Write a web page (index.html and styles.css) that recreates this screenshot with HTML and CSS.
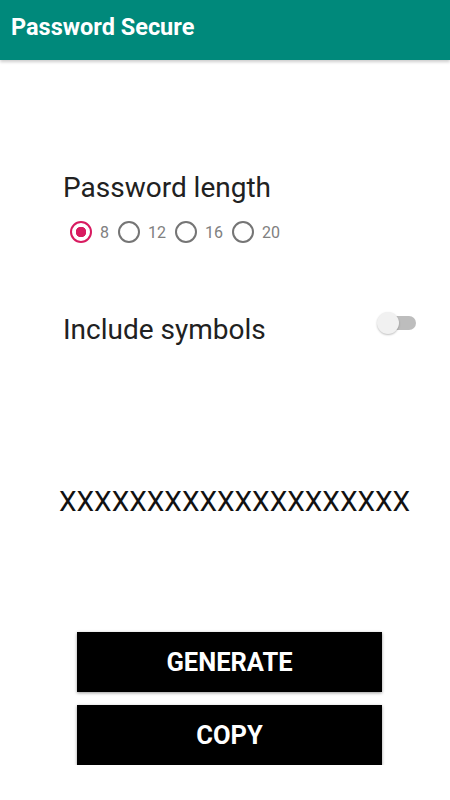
FILE: index.html
```html
<!DOCTYPE html>
<html lang="en">
<head>
    <meta charset="UTF-8">
    <meta name="viewport" content="width=device-width, initial-scale=1.0">
    <title>Password Secure</title>
    <link rel="stylesheet" href="styles.css">
</head>
<body>
    <header class="app-bar">Password Secure</header>

    <main class="content">
        <p class="label">Password length</p>
        <div class="radio-group">
            <label class="radio"><input type="radio" name="length" value="8" checked>8</label>
            <label class="radio"><input type="radio" name="length" value="12">12</label>
            <label class="radio"><input type="radio" name="length" value="16">16</label>
            <label class="radio"><input type="radio" name="length" value="20">20</label>
        </div>

        <div class="symbols-row">
            <p class="label">Include symbols</p>
            <!-- Switch, off by default -->
            <div class="switch">
                <span class="switch-track"></span>
                <span class="switch-thumb"></span>
            </div>
        </div>

        <p class="password">XXXXXXXXXXXXXXXXXXXX</p>
    </main>

    <div class="actions">
        <button type="button">GENERATE</button>
        <button type="button">COPY</button>
    </div>
</body>
</html>
```

FILE: styles.css
```css
body {
    margin: 0;
    font-family: Roboto, "Liberation Sans", sans-serif;
    background-color: #FFFFFF;
    color: #212121;
}

.app-bar {
    height: 60px;
    box-sizing: border-box;
    padding: 14px 11px 0;
    background-color: #00897B;
    color: #FFFFFF;
    font-size: 23.5px;
    font-weight: 700;
    line-height: 26px;
    box-shadow: 0 2px 3px rgba(0, 0, 0, 0.2);
}

.content {
    padding: 112px 34px 0 63px;
}

.label {
    margin: 0;
    font-size: 28px;
    line-height: 32px;
}

.radio-group {
    display: flex;
    align-items: center;
    margin: 17px 0 0 7px;
}

.radio {
    display: flex;
    align-items: center;
    gap: 8px;
    margin-right: 9px;
    font-size: 16px;
    color: #808080;
}

.radio input {
    appearance: none;
    margin: 0;
    width: 22px;
    height: 22px;
    box-sizing: border-box;
    border: 2px solid #757575;
    border-radius: 50%;
}

.radio input:checked {
    border-color: #D81B60;
    background: radial-gradient(circle, #D81B60 0 5px, transparent 5.5px);
}

.symbols-row {
    display: flex;
    justify-content: space-between;
    align-items: flex-start;
    margin-top: 71px;
}

.switch {
    position: relative;
    width: 39px;
    height: 22px;
    margin-top: -2px;
}

.switch-track {
    display: block;
    margin: 4px 0 0 3px;
    width: 36px;
    height: 14px;
    border-radius: 7px;
    background-color: #BDBDBD;
}

/* thumb sits over the left end of the track */
.switch-thumb {
    position: absolute;
    left: 0;
    top: 0;
    width: 22px;
    height: 22px;
    border-radius: 50%;
    background-color: #F1F1F1;
    box-shadow: 0 1px 2px rgba(0, 0, 0, 0.25);
}

.password {
    margin: 140px 0 0 -4px;
    font-size: 28px;
    line-height: 32px;
    color: #111111;
}

.actions {
    display: flex;
    flex-direction: column;
    gap: 13px;
    margin: 114px 68px 0 77px;
}

.actions button {
    height: 60px;
    border: none;
    background-color: #000000;
    color: #FFFFFF;
    font-family: Roboto, "Liberation Sans", sans-serif;
    font-size: 25.5px;
    font-weight: 700;
    box-shadow: 0 1px 3px rgba(0, 0, 0, 0.4);
}
```
